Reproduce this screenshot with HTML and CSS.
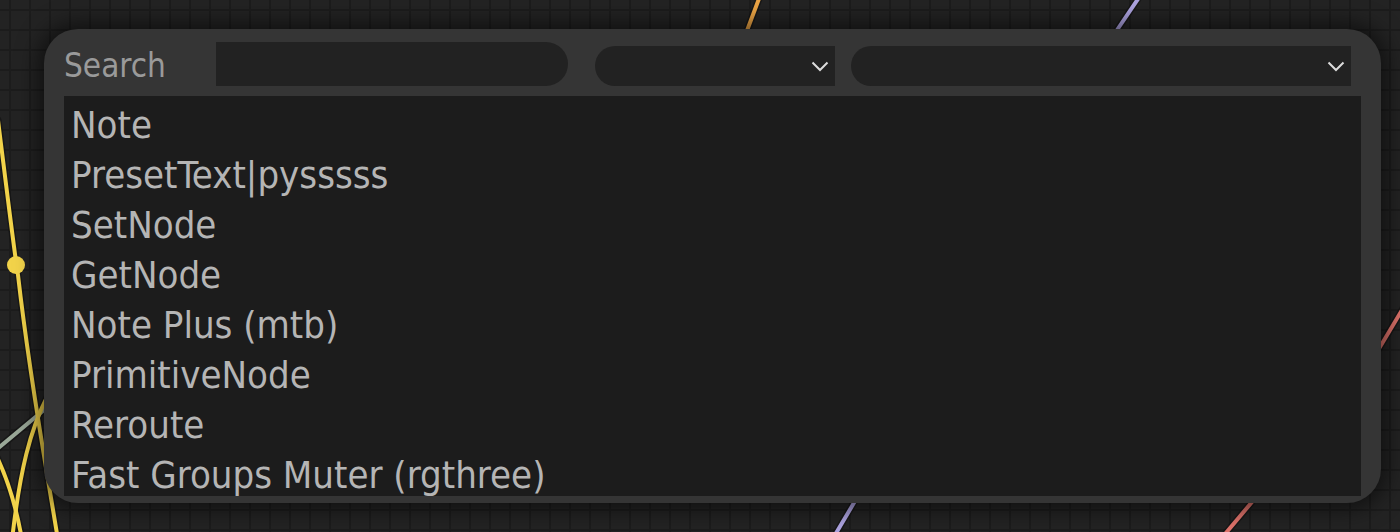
FILE: index.html
```html
<!DOCTYPE html>
<html>
<head>
<meta charset="utf-8">
<link rel="stylesheet" href="styles.css">
</head>
<body>
<div class="canvas">
  <svg class="wires" width="1400" height="532" viewBox="0 0 1400 532">
    <g class="shadow" fill="none" stroke="#111" stroke-width="7" stroke-linecap="round" opacity="0.6">
      <path d="M760 -4 L745 36"/>
      <path d="M1140 -4 L1113 36"/>
      <path d="M858 496 L832 540"/>
      <path d="M1257 496 L1220 540"/>
      <path d="M1377 352 L1405 305"/>
      <path d="M-2 120 C8 200 14 250 18 275 C30 380 45 460 58 540"/>
      <path d="M-4 450 L50 405"/>
      <path d="M48 395 C30 430 20 470 12 540"/>
      <path d="M-4 455 C8 480 16 505 22 540"/>
    </g>
    <g fill="none" stroke-width="4" stroke-linecap="round">
      <path d="M760 -4 L745 36" stroke="#eda545"/>
      <path d="M1140 -4 L1113 36" stroke="#ada3e0"/>
      <path d="M858 496 L832 540" stroke="#ada3e0"/>
      <path d="M1257 496 L1220 540" stroke="#e0736b"/>
      <path d="M1377 352 L1405 305" stroke="#e0736b"/>
      <path d="M-4 450 L50 405" stroke="#9aa898"/>
      <path d="M-2 120 C8 200 14 250 18 275 C30 380 45 460 58 540" stroke="#f2d34a"/>
      <path d="M48 395 C30 430 20 470 12 540" stroke="#f2d34a"/>
      <path d="M-4 455 C8 480 16 505 22 540" stroke="#f2d34a"/>
    </g>
    <circle cx="16" cy="265" r="9" fill="#f2d34a"/>
  </svg>

  <div class="searchbox">
    <div class="header">
      <span class="label">Search</span>
      <div class="input"></div>
      <div class="select sel1">
        <svg class="chev" width="18" height="11" viewBox="0 0 18 11"><path d="M1.5 1.5 L9 9 L16.5 1.5" fill="none" stroke="#dcdcdc" stroke-width="2"/></svg>
      </div>
      <div class="select sel2">
        <svg class="chev" width="18" height="11" viewBox="0 0 18 11"><path d="M1.5 1.5 L9 9 L16.5 1.5" fill="none" stroke="#dcdcdc" stroke-width="2"/></svg>
      </div>
    </div>
    <div class="list">
      <div class="item">Note</div>
      <div class="item">PresetText|pysssss</div>
      <div class="item">SetNode</div>
      <div class="item">GetNode</div>
      <div class="item">Note Plus (mtb)</div>
      <div class="item">PrimitiveNode</div>
      <div class="item">Reroute</div>
      <div class="item">Fast Groups Muter (rgthree)</div>
    </div>
  </div>
</div>
</body>
</html>
```

FILE: styles.css
```css
html, body {
  margin: 0;
  padding: 0;
  background: #222;
}

.canvas {
  position: relative;
  width: 1400px;
  height: 532px;
  overflow: hidden;
  background-color: #232323;
  background-image:
    linear-gradient(to right, #1c1c1c 2px, transparent 2px),
    linear-gradient(to bottom, #1c1c1c 2px, transparent 2px);
  background-size: 20px 20px;
  background-position: 9px 9px;
  font-family: "DejaVu Sans Condensed", "DejaVu Sans", sans-serif;
  font-stretch: condensed;
}

.wires {
  position: absolute;
  left: 0;
  top: 0;
}

.searchbox {
  position: absolute;
  left: 44px;
  top: 29px;
  width: 1337px;
  height: 474px;
  box-sizing: border-box;
  background: #353535;
  border-radius: 34px;
  box-shadow: 0 0 22px 6px rgba(0, 0, 0, 0.55);
  padding: 13px 20px 7px 20px;
  display: flex;
  flex-direction: column;
  gap: 10px;
}

.header {
  display: flex;
  align-items: flex-end;
  height: 44px;
}

.label {
  align-self: center;
  width: 152px;
  padding-top: 3px;
  font-size: 33px;
  color: #9a9a9a;
  line-height: 44px;
}

.input {
  width: 352px;
  height: 44px;
  background: #222;
  border-radius: 0 22px 22px 0;
}

.select {
  height: 40px;
  box-sizing: border-box;
  background: #222;
  border-radius: 20px 0 0 20px;
  display: flex;
  align-items: center;
  justify-content: flex-end;
  padding-right: 6px;
}

.sel1 {
  width: 240px;
  margin-left: 27px;
}

.sel2 {
  width: 500px;
  margin-left: 16px;
}

.chev {
  display: block;
}

.list {
  flex: 1;
  background: #1c1c1c;
  overflow: hidden;
  padding: 4px 0 0 7px;
}

.item {
  height: 50px;
  line-height: 50px;
  font-size: 38px;
  color: #b5b5b5;
  white-space: nowrap;
}
```
